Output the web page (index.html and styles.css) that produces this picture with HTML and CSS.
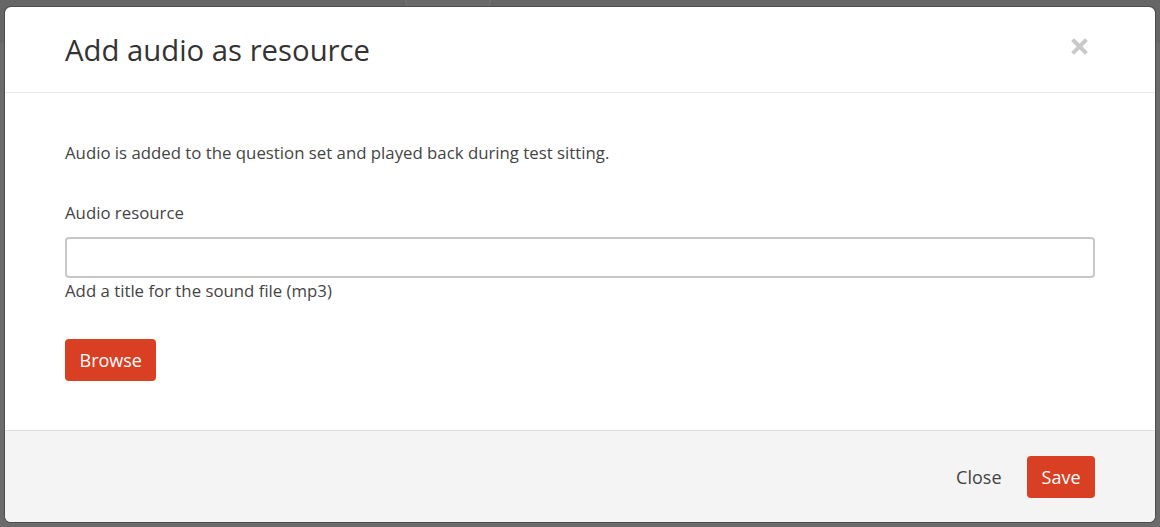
FILE: index.html
```html
<!DOCTYPE html>
<html lang="en">
<head>
    <meta charset="UTF-8" />
    <meta name="viewport" content="width=device-width, initial-scale=1" />
    <title>Add audio as resource</title>
    <link rel="stylesheet" href="styles.css">
</head>
<body>
    <div class="page-bar">
        <span class="page-tab"></span>
    </div>

    <div class="modal">
        <div class="modal-header">
            <h1 class="modal-title">Add audio as resource</h1>
            <button class="close" aria-label="Close">
                <svg width="17" height="17" viewBox="0 0 17 17">
                    <path d="M3 3 L14 14 M14 3 L3 14" stroke="#c9c9c9" stroke-width="4" stroke-linecap="square" />
                </svg>
            </button>
        </div>

        <div class="modal-body">
            <p class="intro">Audio is added to the question set and played back during test sitting.</p>

            <label class="field-label" for="audioTitle">Audio resource</label>
            <input type="text" id="audioTitle" class="field-input" />
            <p class="help">Add a title for the sound file (mp3)</p>

            <button class="btn btn-primary btn-browse">Browse</button>
        </div>

        <div class="modal-footer">
            <button class="btn btn-link">Close</button>
            <button class="btn btn-primary">Save</button>
        </div>
    </div>
</body>
</html>
```

FILE: styles.css
```css
body { margin: 0; background: #6b6b6b; font-family: "Open Sans", Arial, sans-serif; color: #444; position: relative; height: 527px; overflow: hidden; }
.page-bar { height: 43px; background: #666; }
.page-tab { position: absolute; left: 405px; top: -10px; width: 84px; height: 17px; border: 1px solid #767676; border-radius: 8px; background: #6a6a6a; }

.modal { position: absolute; left: 5px; top: 7px; width: 1150px; height: 515px; background: #fff; border-radius: 6px; box-shadow: 0 0 0 1px #4d4d4d; display: flex; flex-direction: column; overflow: hidden; }

.modal-header { height: 86px; box-sizing: border-box; border-bottom: 1px solid #e8e8e8; display: flex; align-items: center; justify-content: space-between; padding: 0 67px 0 60px; }
.modal-title { margin: 0; font-size: 29.3px; font-weight: 400; color: #333; }
.close { background: none; border: none; padding: 0; cursor: pointer; display: flex; margin-top: -6px; }

.modal-body { flex: 1; padding: 48px 60px 0; }
.intro { margin: 0 0 36px; font-size: 16.8px; line-height: 24px; }
.field-label { display: block; font-size: 16.8px; line-height: 24px; margin-bottom: 12px; }
.field-input { display: block; width: 100%; box-sizing: border-box; height: 41px; border: 2px solid #c8c8c8; border-radius: 4px; font: inherit; padding: 0 10px; }
.help { margin: 1px 0 36px; font-size: 16.8px; line-height: 24px; }

.btn { font-family: inherit; font-size: 18px; border-radius: 4px; border: none; cursor: pointer; height: 42px; padding: 0 14.5px; }
.btn-primary { background: #d93f22; color: #fff; }
.btn-link { background: none; color: #444; margin-right: 11px; }

.modal-footer { height: 92px; box-sizing: border-box; background: #f4f4f4; border-top: 1px solid #e0e0e0; display: flex; align-items: center; justify-content: flex-end; padding: 0 60px; }
```
